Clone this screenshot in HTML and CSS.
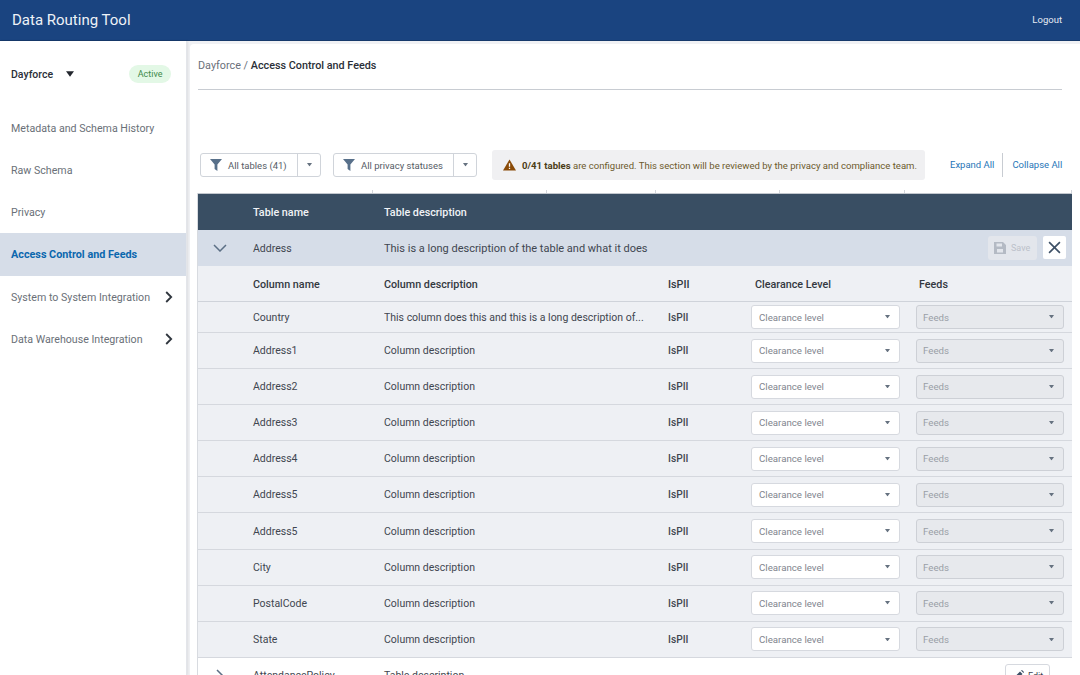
FILE: index.html
```html
<!DOCTYPE html>
<html lang="en">
<head>
<meta charset="utf-8">
<title>Data Routing Tool</title>
<link rel="stylesheet" href="styles.css">
</head>
<body>
<svg class="defs" width="0" height="0" aria-hidden="true">
  <symbol id="funnel" viewBox="0 0 12 12"><path d="M0 0H12L7.4 5.6V12L4.6 10V5.6Z"/></symbol>
  <symbol id="caret" viewBox="0 0 6 4"><path d="M0 0H6L3 4Z"/></symbol>
  <symbol id="chev" viewBox="0 0 8 12"><path d="M1.2 1 6.2 6 1.2 11" fill="none" stroke="currentColor" stroke-width="1.8"/></symbol>
</svg>
<header class="topbar">
  <div class="brand">Data Routing Tool</div>
  <a class="logout">Logout</a>
</header>
<div class="shell">
  <aside class="side">
    <div class="tenant">
      <span class="tenant-name">Dayforce</span>
      <svg class="tenant-caret"><use href="#caret"/></svg>
      <span class="pill">Active</span>
    </div>
    <nav class="nav">
      <a class="nav-item">Metadata and Schema History</a>
      <a class="nav-item">Raw Schema</a>
      <a class="nav-item">Privacy</a>
      <a class="nav-item nav-on">Access Control and Feeds</a>
      <a class="nav-item">System to System Integration<svg class="nav-chev"><use href="#chev"/></svg></a>
      <a class="nav-item">Data Warehouse Integration<svg class="nav-chev"><use href="#chev"/></svg></a>
    </nav>
  </aside>
  <main class="main">
    <div class="crumbs">Dayforce / <b>Access Control and Feeds</b></div>
    <div class="toolbar">
      <div class="filter f1"><span class="filter-main"><svg class="funnel"><use href="#funnel"/></svg>All tables (41)</span><span class="filter-drop"><svg class="caret"><use href="#caret"/></svg></span></div>
      <div class="filter f2"><span class="filter-main"><svg class="funnel"><use href="#funnel"/></svg>All privacy statuses</span><span class="filter-drop"><svg class="caret"><use href="#caret"/></svg></span></div>
      <div class="notice">
        <svg class="warn" viewBox="0 0 14 12"><path d="M7 0 14 12H0Z" fill="#8a4b08"/><path d="M6.3 4H7.7V8H6.3ZM6.3 9H7.7V10.4H6.3Z" fill="#fff"/></svg>
        <span><b>0/41 tables</b> are configured. This section will be reviewed by the privacy and compliance team.</span>
      </div>
      <div class="links"><a class="link-a">Expand All</a><a class="link-b">Collapse All</a></div>
    </div>
    <div class="ticks"><i class="t1"></i><i class="t2"></i><i class="t3"></i><i class="t4"></i><i class="t5"></i><i class="t6"></i></div>
    <div class="table">
      <div class="row thead"><span></span><span>Table name</span><span>Table description</span></div>
      <div class="row tsel">
        <svg class="exp" viewBox="0 0 14 8"><path d="M1 1 7 7 13 1" fill="none" stroke="#5c6f85" stroke-width="1.5"/></svg>
        <span>Address</span><span class="wide">This is a long description of the table and what it does</span>
        <div class="sel-actions">
          <span class="save"><svg viewBox="0 0 12 12"><path d="M0 0H9L12 3V12H0ZM2.5 1.5V4.5H8V1.5ZM3 7V10.5H9V7Z" fill="#b4bac4" fill-rule="evenodd"/></svg>Save</span>
          <span class="close"><svg viewBox="0 0 12 12"><path d="M1 1 11 11M11 1 1 11" stroke="#3d5066" stroke-width="1.5"/></svg></span>
        </div>
      </div>
      <div class="row chead"><span></span><span>Column name</span><span>Column description</span><span>IsPII</span><span class="ch-cl">Clearance Level</span><span class="ch-fd">Feeds</span></div>
      <div class="row crow first"><span></span><span>Country</span><span>This column does this and this is a long description of...</span><b>IsPII</b><div class="sel"><span>Clearance level</span><svg class="caret"><use href="#caret"/></svg></div><div class="sel off"><span>Feeds</span><svg class="caret"><use href="#caret"/></svg></div></div>
      <div class="row crow"><span></span><span>Address1</span><span>Column description</span><b>IsPII</b><div class="sel"><span>Clearance level</span><svg class="caret"><use href="#caret"/></svg></div><div class="sel off"><span>Feeds</span><svg class="caret"><use href="#caret"/></svg></div></div>
      <div class="row crow"><span></span><span>Address2</span><span>Column description</span><b>IsPII</b><div class="sel"><span>Clearance level</span><svg class="caret"><use href="#caret"/></svg></div><div class="sel off"><span>Feeds</span><svg class="caret"><use href="#caret"/></svg></div></div>
      <div class="row crow"><span></span><span>Address3</span><span>Column description</span><b>IsPII</b><div class="sel"><span>Clearance level</span><svg class="caret"><use href="#caret"/></svg></div><div class="sel off"><span>Feeds</span><svg class="caret"><use href="#caret"/></svg></div></div>
      <div class="row crow"><span></span><span>Address4</span><span>Column description</span><b>IsPII</b><div class="sel"><span>Clearance level</span><svg class="caret"><use href="#caret"/></svg></div><div class="sel off"><span>Feeds</span><svg class="caret"><use href="#caret"/></svg></div></div>
      <div class="row crow"><span></span><span>Address5</span><span>Column description</span><b>IsPII</b><div class="sel"><span>Clearance level</span><svg class="caret"><use href="#caret"/></svg></div><div class="sel off"><span>Feeds</span><svg class="caret"><use href="#caret"/></svg></div></div>
      <div class="row crow"><span></span><span>Address5</span><span>Column description</span><b>IsPII</b><div class="sel"><span>Clearance level</span><svg class="caret"><use href="#caret"/></svg></div><div class="sel off"><span>Feeds</span><svg class="caret"><use href="#caret"/></svg></div></div>
      <div class="row crow"><span></span><span>City</span><span>Column description</span><b>IsPII</b><div class="sel"><span>Clearance level</span><svg class="caret"><use href="#caret"/></svg></div><div class="sel off"><span>Feeds</span><svg class="caret"><use href="#caret"/></svg></div></div>
      <div class="row crow"><span></span><span>PostalCode</span><span>Column description</span><b>IsPII</b><div class="sel"><span>Clearance level</span><svg class="caret"><use href="#caret"/></svg></div><div class="sel off"><span>Feeds</span><svg class="caret"><use href="#caret"/></svg></div></div>
      <div class="row crow"><span></span><span>State</span><span>Column description</span><b>IsPII</b><div class="sel"><span>Clearance level</span><svg class="caret"><use href="#caret"/></svg></div><div class="sel off"><span>Feeds</span><svg class="caret"><use href="#caret"/></svg></div></div>
      <div class="row tclosed">
        <svg class="exp-r" viewBox="0 0 8 14"><path d="M1 1 7 7 1 13" fill="none" stroke="#5c6f85" stroke-width="1.5"/></svg>
        <span>AttendancePolicy</span><span class="wide">Table description</span>
        <span class="edit"><svg viewBox="0 0 12 12"><path d="M0 12 1 8.5 8 1.5 10.5 4 3.5 11ZM9 .5 10 0 12 2 11.5 3Z" fill="#3d5066"/></svg>Edit</span>
      </div>
    </div>
  </main>
</div>
</body>
</html>
```

FILE: styles.css
```css
* { box-sizing: border-box; }
html, body { margin: 0; height: 675px; overflow: hidden; background: #fff; }
body { font-family: Roboto, "Liberation Sans", sans-serif; font-size: 10.5px; color: #3d4551; }
.defs { position: absolute; }
a { color: inherit; text-decoration: none; }
svg { display: block; fill: currentColor; }

.topbar { height: 41px; background: #1a4480; border-bottom: 1px solid #16396b; color: #fff; display: flex; align-items: center; justify-content: space-between; padding: 0 18px 1px 12px; }
.brand { font-size: 15px; color: #eef2f7; }
.logout { font-size: 9.5px; color: #e6ebf3; }

.shell { display: flex; height: 634px; background: #f0f1f4; }
.side { width: 187px; flex: none; background: #fff; border-right: 1px solid #e3e5ea; box-shadow: 1px 0 2px rgba(0,0,0,.08); }
.tenant { height: 66px; display: flex; align-items: center; padding: 0 15px 0 11px; }
.tenant-name { font-size: 10.5px; font-weight: 500; color: #2a2f37; }
.tenant-caret { width: 8px; height: 6px; margin-left: 13px; color: #23272e; }
.pill { margin-left: auto; height: 18px; padding: 0 8.5px; border-radius: 9px; background: #e3f8e6; color: #3f8a4a; font-size: 9px; line-height: 18px; }
.nav-item { height: 42px; padding: 0 13px 0 11px; display: flex; align-items: center; justify-content: space-between; font-size: 10.65px; color: #6a7078; }
.nav-on { height: 43px; background: #d6dde8; color: #0b67ae; font-weight: 700; font-size: 10.8px; }
.nav-chev { width: 8px; height: 12px; color: #30363e; }

.main { flex: 1; min-width: 0; margin: 3px 0 0 3px; border-radius: 4px 0 0 0; background: #fff; padding: 0 8px; display: flex; flex-direction: column; }
.crumbs { height: 46px; margin-right: 10px; border-bottom: 1px solid #c8ccd2; padding-top: 16px; line-height: 12px; color: #6a707a; font-size: 10.8px; }
.crumbs b { font-weight: 500; color: #2a2f37; }

.toolbar { margin-top: 60px; height: 30px; display: flex; align-items: center; padding-left: 2px; }
.filter { height: 24px; display: flex; border: 1px solid #d0d4da; border-radius: 3px; font-size: 9.5px; color: #565c66; background: #fff; }
.f1 { width: 121px; }
.f2 { width: 144px; margin-left: 12px; }
.filter-main { flex: 1; display: flex; align-items: center; padding-left: 9px; }
.funnel { width: 12px; height: 12px; margin-right: 6px; color: #58708a; }
.filter-drop { width: 23px; border-left: 1px solid #d0d4da; display: flex; align-items: center; justify-content: center; }
.caret { width: 5px; height: 3.5px; color: #667280; }
.notice { margin-left: 15px; width: 433px; height: 30px; background: #f0f0f2; border-radius: 3px; display: flex; align-items: center; padding-left: 11px; font-size: 9.55px; color: #6c5a2c; white-space: nowrap; }
.notice b { font-weight: 700; color: #4b3c16; }
.warn { width: 13px; height: 12px; margin-right: 6px; flex: none; }
.links { margin-left: 25px; display: flex; align-items: center; font-size: 9.5px; line-height: 24px; color: #1f76b8; height: 24px; }
.link-a { padding-right: 8px; border-right: 1px solid #c8ccd2; height: 24px; }
.link-b { padding-left: 9px; height: 24px; }

.ticks { height: 3px; margin-top: 10px; display: grid; grid-template-columns: 175px 174px 109px 124px 125px 167px; }
.ticks i { border-right: 1px solid #d3d6db; }

.table { width: 874px; height: 482px; overflow: hidden; border-top: 1px solid #c2c7ce; box-shadow: -1px 0 0 #d8dbe0; }
.row { display: grid; grid-template-columns: 55px 131px 284px 83px 165px 156px; align-items: center; font-size: 10.5px; }
.thead { height: 36px; background: #394e63; color: #f1f3f6; font-weight: 500; font-size: 10.75px; }
.thead span:nth-child(3) { grid-column: 3 / 5; }
.tsel { height: 36px; background: #d6dde8; position: relative; color: #3f4650; }
.tsel .wide { font-size: 11px; }
.wide { grid-column: 3 / 6; white-space: nowrap; }
.exp { width: 14px; height: 8px; margin-left: 15px; }
.exp-r { width: 8px; height: 14px; margin-left: 18px; }
.sel-actions { position: absolute; right: 6px; top: 6px; display: flex; gap: 6px; }
.save { width: 49px; height: 24px; background: #e3e6ec; border-radius: 3px; display: flex; align-items: center; padding-left: 6px; color: #bcc1ca; font-size: 9px; }
.save svg { width: 12px; height: 12px; margin-right: 5px; }
.close { width: 23px; height: 23px; background: #fff; border-radius: 2px; display: flex; align-items: center; justify-content: center; }
.close svg { width: 13px; height: 13px; }
.chead { height: 36px; padding-top: 1px; background: #eef0f4; border-bottom: 1px solid #cfd3da; font-weight: 500; font-size: 10.75px; color: #33383f; }
.ch-cl { padding-left: 4px; }
.ch-fd { padding-left: 3px; }
.crow { height: 36.1px; background: #eef0f4; border-bottom: 1px solid #d5d8de; color: #3f4650; }
.crow.first { height: 31px; }
.crow > span:nth-child(3) { white-space: nowrap; overflow: hidden; }
.crow > b { font-weight: 500; font-size: 10.2px; }
.sel { width: 149px; height: 24px; background: #fff; border: 1px solid #d6d9df; border-radius: 3px; display: flex; align-items: center; justify-content: space-between; padding: 0 9px 0 7px; font-size: 9.7px; color: #7f858e; }
.sel.off { width: 148px; background: #e7e9ed; border-color: #cdd0d6; color: #9a9fa7; padding-left: 6px; }
.tclosed { height: 36px; background: #fff; position: relative; color: #3f4650; align-items: start; padding-top: 11px; }
.edit { position: absolute; right: 22px; top: 6px; width: 45px; height: 24px; background: #fff; border: 1px solid #d6d9df; border-radius: 3px; display: flex; align-items: center; padding-left: 6px; font-size: 9px; color: #3d4551; }
.edit svg { width: 12px; height: 12px; margin-right: 4px; }
```
